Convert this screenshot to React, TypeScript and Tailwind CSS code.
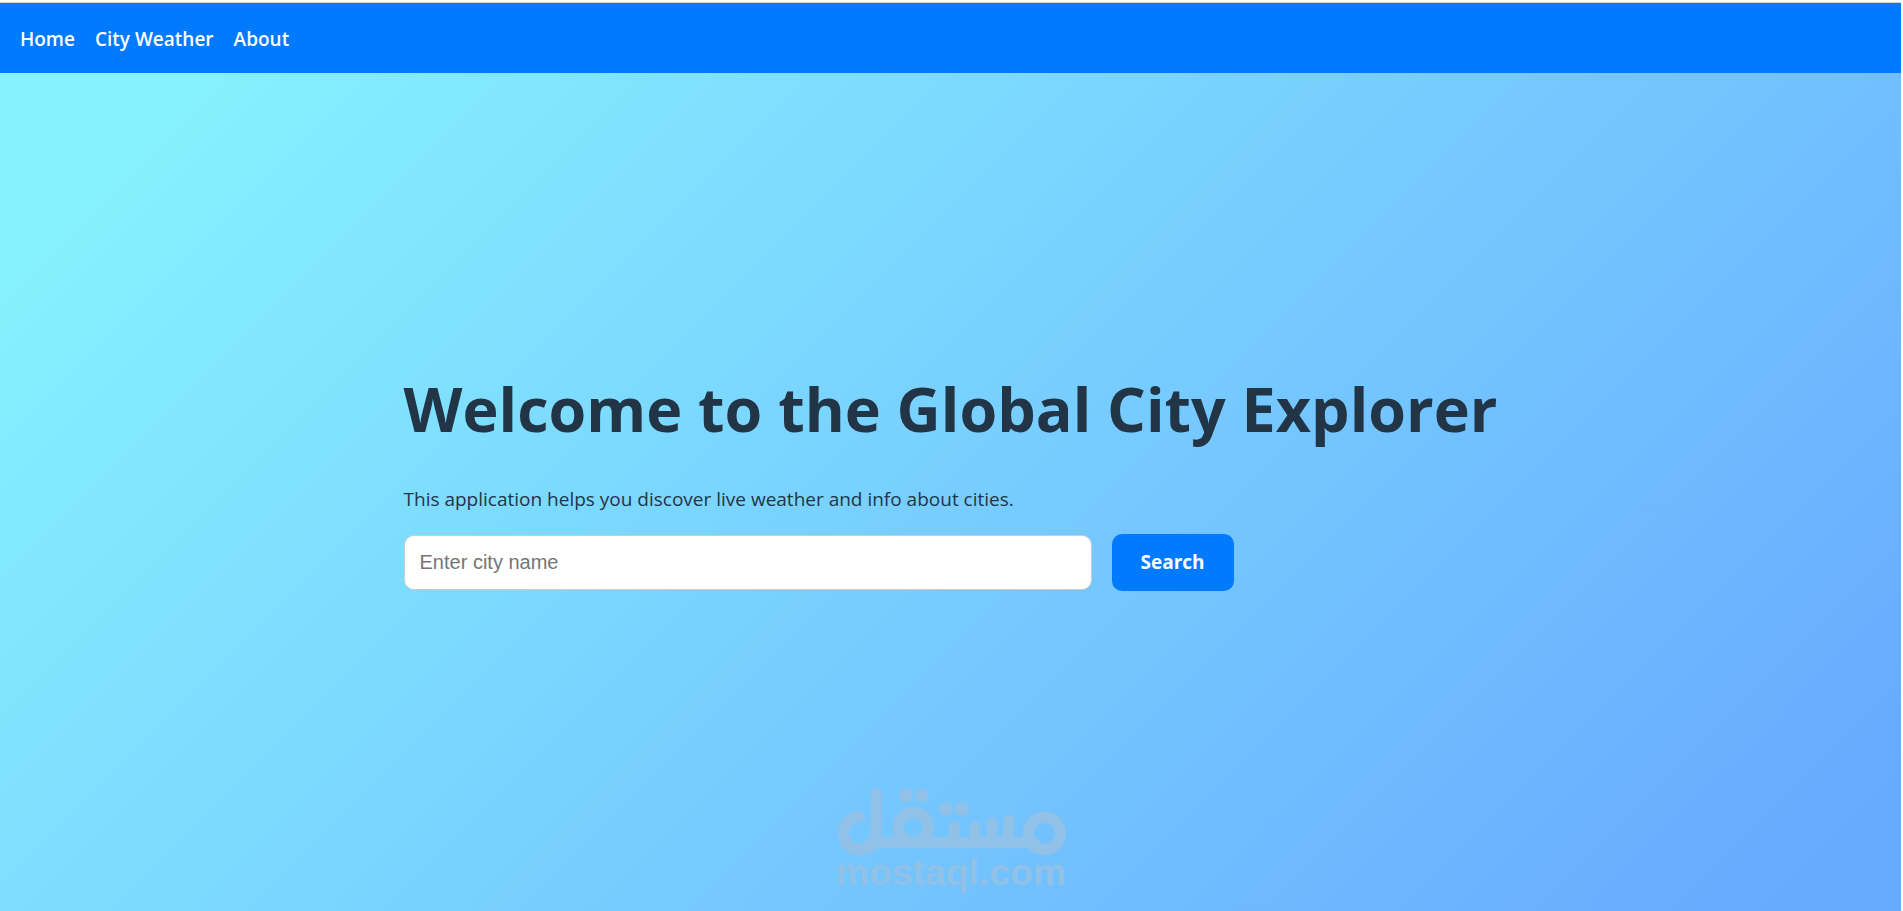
const links = ["Home", "City Weather", "About"];

function Watermark() {
  return (
    <div className="pointer-events-none absolute inset-x-0 bottom-4 flex justify-center text-[#91c1e6]">
      <svg width="240" height="110" viewBox="34 45 720 330" fill="none" stroke="currentColor" strokeLinecap="round" aria-label="mostaql.com">
        <g strokeWidth="34">
          <path d="M116 141C88 141 68 163 68 189C68 217 90 239 116 239C146 239 166 219 166 190V70" />
          <path d="M150 218H640" />
          <circle cx="278" cy="171" r="45" />
          <circle cx="671" cy="190" r="48" />
          <path d="M401 169Q401 195 396 218M464 169Q463 195 460 218M515 158Q514 195 509 218M565 149Q564 190 557 218" strokeWidth="32" />
        </g>
        <g fill="currentColor" stroke="none">
          <circle cx="255" cy="76" r="21" />
          <circle cx="303" cy="76" r="21" />
          <circle cx="376" cy="117" r="21" />
          <circle cx="424" cy="117" r="21" />
          <text x="391" y="345" textAnchor="middle" className="font-['Liberation_Sans',sans-serif] text-[112px] font-bold">mostaql.com</text>
        </g>
      </svg>
    </div>
  );
}

export default function App() {
  return (
    <div className="relative flex min-h-screen flex-col bg-white pr-0.5 pt-0.5 font-['Open_Sans','Noto_Sans',sans-serif] text-[#213547]">
      <nav className="flex h-[71px] items-center gap-5 border-t border-[#d0d4d8] bg-[#007bff] px-5 pt-0.5 text-[19px] font-semibold text-white">
        {links.map((label) => (
          <a key={label} href="#">{label}</a>
        ))}
      </nav>
      <main className="flex flex-1 flex-col items-center justify-center bg-linear-[135deg] from-[#86f1fe] from-7% to-[#68aaff] to-95% pb-5">
        <div>
          <h1 className="text-[61px] leading-[70px] font-bold">Welcome to the Global City Explorer</h1>
          <p className="mt-10 text-[19px] leading-[30px]">This application helps you discover live weather and info about cities.</p>
          <form className="mt-5 flex items-baseline gap-5" onSubmit={(e) => e.preventDefault()}>
            <input
              type="text"
              aria-label="City name"
              placeholder="Enter city name"
              className="h-[55px] w-[688px] rounded-[10px] border border-[#ccc] bg-white px-[15px] font-['Liberation_Sans',sans-serif] text-[20px] placeholder:text-[#757575]"
            />
            <button type="submit" className="h-[57px] w-[122px] rounded-[10px] bg-[#007bff] text-[19px] font-bold text-white">Search</button>
          </form>
        </div>
      </main>
      <Watermark />
    </div>
  );
}
